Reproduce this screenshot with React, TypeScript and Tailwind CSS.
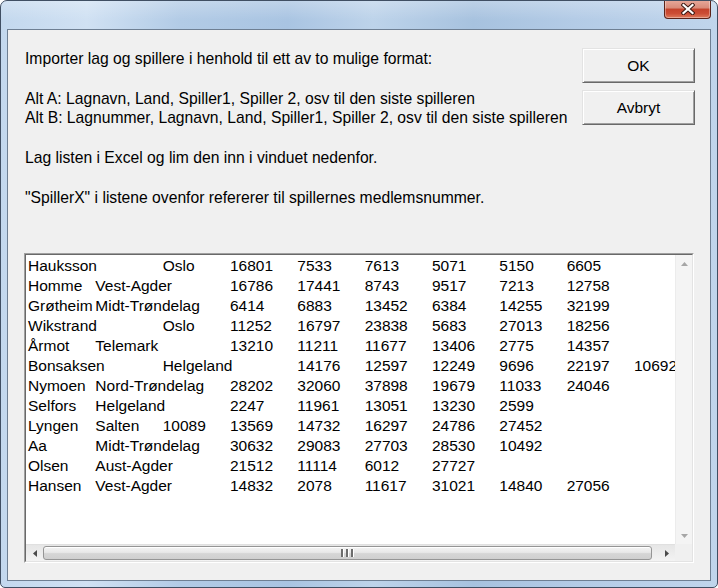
import React from 'react';

const colStart = [
  'col-start-1',
  'col-start-2',
  'col-start-3',
  'col-start-4',
  'col-start-5',
  'col-start-6',
  'col-start-7',
  'col-start-8',
  'col-start-9',
  'col-start-10',
];

// each row: [tab column, value]
const rows: [number, string][][] = [
  [[0, 'Hauksson'], [2, 'Oslo'], [3, '16801'], [4, '7533'], [5, '7613'], [6, '5071'], [7, '5150'], [8, '6605']],
  [[0, 'Homme'], [1, 'Vest-Agder'], [3, '16786'], [4, '17441'], [5, '8743'], [6, '9517'], [7, '7213'], [8, '12758']],
  [[0, 'Grøtheim'], [1, 'Midt-Trøndelag'], [3, '6414'], [4, '6883'], [5, '13452'], [6, '6384'], [7, '14255'], [8, '32199']],
  [[0, 'Wikstrand'], [2, 'Oslo'], [3, '11252'], [4, '16797'], [5, '23838'], [6, '5683'], [7, '27013'], [8, '18256']],
  [[0, 'Årmot'], [1, 'Telemark'], [3, '13210'], [4, '11211'], [5, '11677'], [6, '13406'], [7, '2775'], [8, '14357']],
  [[0, 'Bonsaksen'], [2, 'Helgeland'], [4, '14176'], [5, '12597'], [6, '12249'], [7, '9696'], [8, '22197'], [9, '10692']],
  [[0, 'Nymoen'], [1, 'Nord-Trøndelag'], [3, '28202'], [4, '32060'], [5, '37898'], [6, '19679'], [7, '11033'], [8, '24046']],
  [[0, 'Selfors'], [1, 'Helgeland'], [3, '2247'], [4, '11961'], [5, '13051'], [6, '13230'], [7, '2599']],
  [[0, 'Lyngen'], [1, 'Salten'], [2, '10089'], [3, '13569'], [4, '14732'], [5, '16297'], [6, '24786'], [7, '27452']],
  [[0, 'Aa'], [1, 'Midt-Trøndelag'], [3, '30632'], [4, '29083'], [5, '27703'], [6, '28530'], [7, '10492']],
  [[0, 'Olsen'], [1, 'Aust-Agder'], [3, '21512'], [4, '11114'], [5, '6012'], [6, '27727']],
  [[0, 'Hansen'], [1, 'Vest-Agder'], [3, '14832'], [4, '2078'], [5, '11617'], [6, '31021'], [7, '14840'], [8, '27056']],
];

const Btn = ({ children }: { children: React.ReactNode }) => (
  <button className="w-[113px] h-[35px] bg-[#f0f0f0] border border-t-[#e3e3e3] border-l-[#e3e3e3] border-b-[#696969] border-r-[#696969] shadow-[inset_1px_1px_0_#ffffff,inset_-1px_-1px_0_#a0a0a0] text-[15.5px] leading-none text-black">
    {children}
  </button>
);

const Arrow = ({ dir, color }: { dir: 'up' | 'down' | 'left' | 'right'; color: string }) => {
  const pts = {
    up: '0,4 7,4 3.5,0',
    down: '0,0 7,0 3.5,4',
    left: '4,0 4,7 0,3.5',
    right: '0,0 0,7 4,3.5',
  }[dir];
  const vertical = dir === 'up' || dir === 'down';
  return (
    <svg width={vertical ? 7 : 4} height={vertical ? 4 : 7} viewBox={vertical ? '0 0 7 4' : '0 0 4 7'}>
      <polygon points={pts} fill={color} />
    </svg>
  );
};

const App = () => {
  return (
    <div className="w-[718px] h-[588px] rounded-t-[7px] rounded-b-[5px] border border-[#404f63] overflow-hidden bg-[linear-gradient(90deg,#c3d8ee_0%,#d0e1f3_12%,#b2cbe6_25%,#a9c4e2_40%,#bdd3ea_52%,#a7c2df_66%,#b3cbe6_80%,#c0d5ec_100%)] font-['Liberation_Sans',Arial,sans-serif]">
      {/* title bar */}
      <div className="h-[28px] flex justify-end items-start pr-[6px] bg-[linear-gradient(180deg,rgba(255,255,255,0.25),rgba(255,255,255,0)_70%)]">
        <div className="w-[47px] h-[19px] -mt-px rounded-b-[4px] border border-t-0 border-[#5b231a] bg-[linear-gradient(180deg,#e8aa9c_0%,#d98a78_45%,#c4422b_50%,#cc4d35_75%,#de7a5c_100%)] shadow-[inset_0_0_0_1px_rgba(255,255,255,0.35)] flex items-center justify-center">
          <svg width="14" height="12" viewBox="0 0 14 12">
            <path d="M2.5 2 L11.5 10 M11.5 2 L2.5 10" stroke="#3d1a14" strokeWidth="4.2" strokeLinecap="square" />
            <path d="M2.5 2 L11.5 10 M11.5 2 L2.5 10" stroke="#ffffff" strokeWidth="2.2" strokeLinecap="square" />
          </svg>
        </div>
      </div>

      {/* client area */}
      <div className="mx-[6px] h-[552px] border border-[#6e7f93] bg-[#f0f0f0] text-black">
        <div className="h-[223px] flex justify-between">
          <div className="pl-[17px] pt-[19px] text-[15.7px]">
            <p className="leading-[20px] whitespace-nowrap">Importer lag og spillere i henhold til ett av to mulige format:</p>
            <p className="mt-[20px] leading-[19px] whitespace-nowrap">Alt A: Lagnavn, Land, Spiller1, Spiller 2, osv til den siste spilleren</p>
            <p className="leading-[19px] whitespace-nowrap">Alt B: Lagnummer, Lagnavn, Land, Spiller1, Spiller 2, osv til den siste spilleren</p>
            <p className="mt-[21px] leading-[20px] whitespace-nowrap">Lag listen i Excel og lim den inn i vinduet nedenfor.</p>
            <p className="mt-[20px] leading-[20px] whitespace-nowrap">"SpillerX" i listene ovenfor refererer til spillernes medlemsnummer.</p>
          </div>
          <div className="pt-[18px] pr-[15px] flex flex-col gap-[7px]">
            <Btn>OK</Btn>
            <Btn>Avbryt</Btn>
          </div>
        </div>

        {/* text box */}
        <div className="mx-[16px] h-[310px] border border-t-[#a0a0a0] border-l-[#a0a0a0] border-b-white border-r-white">
          <div className="h-full border border-t-[#696969] border-l-[#696969] border-b-[#e3e3e3] border-r-[#e3e3e3] bg-white flex flex-col">
            <div className="flex-1 flex min-h-0">
              <div className="flex-1 overflow-hidden pl-[2px] pt-px text-[15.5px]">
                {rows.map((row, i) => (
                  <div key={i} className="grid grid-cols-[repeat(10,67.33px)] w-max h-[20px] leading-[20px]">
                    {row.map(([c, v]) => (
                      <span key={c} className={`${colStart[c]} row-start-1 whitespace-nowrap`}>
                        {v}
                      </span>
                    ))}
                  </div>
                ))}
              </div>
              <div className="w-[17px] bg-[#f4f4f4] border-l border-[#ececec] flex flex-col justify-between">
                <div className="h-[17px] flex items-center justify-center">
                  <Arrow dir="up" color="#a6a6a6" />
                </div>
                <div className="h-[17px] flex items-center justify-center">
                  <Arrow dir="down" color="#a6a6a6" />
                </div>
              </div>
            </div>
            <div className="h-[17px] flex">
              <div className="flex-1 flex bg-[linear-gradient(180deg,#e6e6e6,#f3f3f3)] border-t border-[#e0e0e0]">
                <div className="w-[17px] flex items-center justify-center">
                  <Arrow dir="left" color="#4a4a4a" />
                </div>
                <div className="flex-1 pr-[6px] py-px">
                  <div className="h-full rounded-[3px] border border-[#959595] bg-[linear-gradient(180deg,#f4f4f4_0%,#e8e8e8_45%,#d6d6d6_55%,#cfcfcf_100%)] shadow-[inset_0_1px_0_#ffffff] flex items-center justify-center gap-[2px]">
                    <span className="w-[2px] h-[8px] bg-[#6d6d6d] border-r border-white box-content"></span>
                    <span className="w-[2px] h-[8px] bg-[#6d6d6d] border-r border-white box-content"></span>
                    <span className="w-[2px] h-[8px] bg-[#6d6d6d] border-r border-white box-content"></span>
                  </div>
                </div>
                <div className="w-[17px] flex items-center justify-center">
                  <Arrow dir="right" color="#4a4a4a" />
                </div>
              </div>
              <div className="w-[17px] bg-[#f0f0f0]"></div>
            </div>
          </div>
        </div>
      </div>
    </div>
  );
};

export default App;
